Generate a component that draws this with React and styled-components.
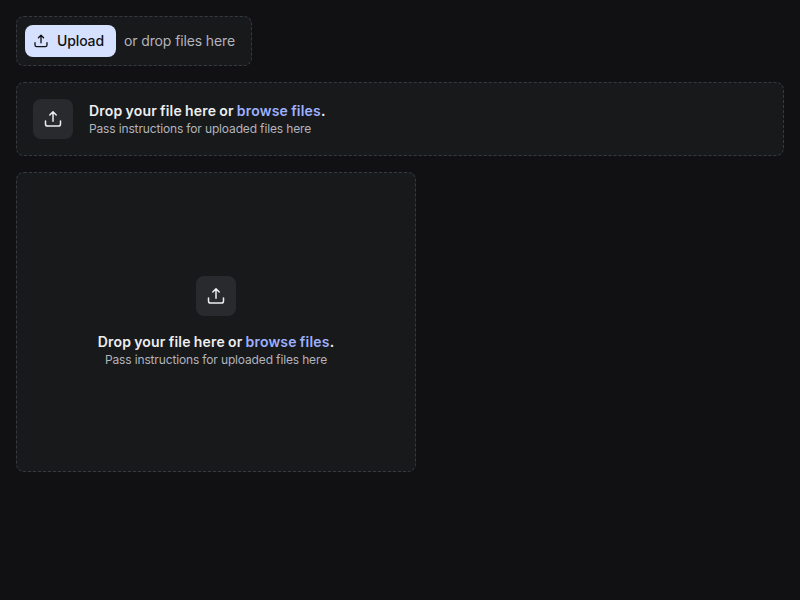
import React from "react";
import styled, { createGlobalStyle } from "styled-components";

const GlobalStyle = createGlobalStyle`
  * { box-sizing: border-box; }
  body {
    margin: 0;
    background: #111113;
    font-family: Inter, sans-serif;
  }
`;

const Page = styled.main`
  display: flex;
  flex-direction: column;
  align-items: flex-start;
  gap: 16px;
  padding: 16px;
`;

const Dropzone = styled.section`
  display: flex;
  align-items: center;
  background: #18191b;
  border: 1px dashed #363a3f;
  border-radius: 8px;
`;

const CompactZone = styled(Dropzone)`
  gap: 8px;
  padding: 8px 16px 8px 8px;
`;

const RowZone = styled(Dropzone)`
  width: 100%;
  gap: 16px;
  padding: 16px;
`;

const CardZone = styled(Dropzone)`
  flex-direction: column;
  justify-content: center;
  gap: 16px;
  width: 400px;
  height: 300px;
  text-align: center;
`;

const UploadButton = styled.button`
  display: flex;
  align-items: center;
  gap: 8px;
  height: 32px;
  padding: 0 12px 0 8px;
  border: 0;
  border-radius: 8px;
  background: #d6e1ff;
  color: #111113;
  font: 500 14px/20px Inter, sans-serif;
  letter-spacing: -0.13px;
`;

const Hint = styled.span`
  color: #b2b3bd;
  font-size: 14px;
  line-height: 20px;
  letter-spacing: -0.12px;
`;

const IconTile = styled.div`
  display: flex;
  align-items: center;
  justify-content: center;
  width: 40px;
  height: 40px;
  border-radius: 8px;
  background: #292a2e;
  color: #edeef0;
`;

const Title = styled.div`
  color: #edeef0;
  font-size: 14px;
  font-weight: 600;
  line-height: 20px;
  letter-spacing: 0.2px;
  word-spacing: -0.65px;
`;

const Browse = styled.span`
  color: #9eb1ff;
`;

const Description = styled.div`
  color: #b2b3bd;
  font-size: 12px;
  line-height: 16px;
  letter-spacing: -0.146px;
`;

const Icon = styled.svg`
  display: block;
  width: ${(p) => p.$size}px;
  height: ${(p) => p.$size}px;
  fill: none;
  stroke: currentColor;
  stroke-width: ${(p) => (p.$size < 20 ? 1.65 : 1.5)};
  stroke-linecap: round;
  stroke-linejoin: round;
`;

const UploadIcon = ({ size = 20 }) => (
  <Icon $size={size} viewBox="0 0 20 20" aria-hidden="true">
    <path d="M10 12.3V3M6.8 6 10 2.8 13.2 6M2.5 12v3c0 1.2.9 2.1 2.1 2.1h10.8c1.2 0 2.1-.9 2.1-2.1V12" />
  </Icon>
);

const Instructions = () => (
  <div>
    <Title>
      Drop your file here or <Browse>browse files</Browse>.
    </Title>
    <Description>Pass instructions for uploaded files here</Description>
  </div>
);

export default function App() {
  return (
    <>
      <GlobalStyle />
      <Page>
        <CompactZone>
          <UploadButton>
            <UploadIcon size={16} />
            Upload
          </UploadButton>
          <Hint>or drop files here</Hint>
        </CompactZone>
        <RowZone>
          <IconTile>
            <UploadIcon />
          </IconTile>
          <Instructions />
        </RowZone>
        <CardZone>
          <IconTile>
            <UploadIcon />
          </IconTile>
          <Instructions />
        </CardZone>
      </Page>
    </>
  );
}
